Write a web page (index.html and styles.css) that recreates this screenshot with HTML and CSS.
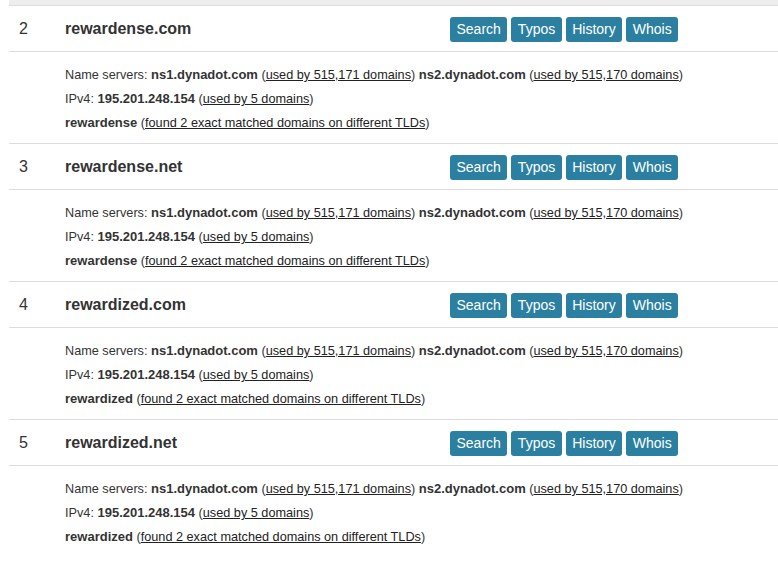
FILE: index.html
```html
<!DOCTYPE html>
<html>
<head>
<meta charset="utf-8">
<link rel="stylesheet" href="styles.css">
</head>
<body>
<div class="results">
  <div class="topband"></div>

  <div class="record">
    <div class="head">
      <div class="num">2</div>
      <div class="domain">rewardense.com</div>
      <div class="actions"><a class="btn">Search</a><a class="btn">Typos</a><a class="btn">History</a><a class="btn">Whois</a></div>
    </div>
    <div class="details">
      <div class="line">Name servers: <b>ns1.dynadot.com</b> (<a>used by 515,171 domains</a>) <b>ns2.dynadot.com</b> (<a>used by 515,170 domains</a>)</div>
      <div class="line">IPv4: <b>195.201.248.154</b> (<a>used by 5 domains</a>)</div>
      <div class="line"><b>rewardense</b> (<a>found 2 exact matched domains on different TLDs</a>)</div>
    </div>
  </div>

  <div class="record">
    <div class="head">
      <div class="num">3</div>
      <div class="domain">rewardense.net</div>
      <div class="actions"><a class="btn">Search</a><a class="btn">Typos</a><a class="btn">History</a><a class="btn">Whois</a></div>
    </div>
    <div class="details">
      <div class="line">Name servers: <b>ns1.dynadot.com</b> (<a>used by 515,171 domains</a>) <b>ns2.dynadot.com</b> (<a>used by 515,170 domains</a>)</div>
      <div class="line">IPv4: <b>195.201.248.154</b> (<a>used by 5 domains</a>)</div>
      <div class="line"><b>rewardense</b> (<a>found 2 exact matched domains on different TLDs</a>)</div>
    </div>
  </div>

  <div class="record">
    <div class="head">
      <div class="num">4</div>
      <div class="domain">rewardized.com</div>
      <div class="actions"><a class="btn">Search</a><a class="btn">Typos</a><a class="btn">History</a><a class="btn">Whois</a></div>
    </div>
    <div class="details">
      <div class="line">Name servers: <b>ns1.dynadot.com</b> (<a>used by 515,171 domains</a>) <b>ns2.dynadot.com</b> (<a>used by 515,170 domains</a>)</div>
      <div class="line">IPv4: <b>195.201.248.154</b> (<a>used by 5 domains</a>)</div>
      <div class="line"><b>rewardized</b> (<a>found 2 exact matched domains on different TLDs</a>)</div>
    </div>
  </div>

  <div class="record">
    <div class="head">
      <div class="num">5</div>
      <div class="domain">rewardized.net</div>
      <div class="actions"><a class="btn">Search</a><a class="btn">Typos</a><a class="btn">History</a><a class="btn">Whois</a></div>
    </div>
    <div class="details">
      <div class="line">Name servers: <b>ns1.dynadot.com</b> (<a>used by 515,171 domains</a>) <b>ns2.dynadot.com</b> (<a>used by 515,170 domains</a>)</div>
      <div class="line">IPv4: <b>195.201.248.154</b> (<a>used by 5 domains</a>)</div>
      <div class="line"><b>rewardized</b> (<a>found 2 exact matched domains on different TLDs</a>)</div>
    </div>
  </div>
</div>
</body>
</html>
```

FILE: styles.css
```css
html, body {
  margin: 0;
  padding: 0;
  background: #fff;
}
body {
  font-family: "Liberation Sans", Arial, sans-serif;
  color: #333;
  overflow: hidden;
}
.results {
  margin-left: 9px;
}
.topband {
  height: 5px;
  background: #eeeeee;
}
.head {
  display: flex;
  align-items: center;
  height: 45px;
  border-top: 1px solid #dddddd;
  padding-top: 1px;
  box-sizing: border-box;
  height: 46px;
}
.num {
  width: 36px;
  padding-left: 10px;
  font-size: 16px;
}
.domain {
  width: 375px;
  padding-left: 10px;
  font-size: 16px;
  font-weight: bold;
}
.actions {
  display: flex;
  gap: 4px;
  padding-left: 10px;
}
.btn {
  display: block;
  height: 25px;
  line-height: 25px;
  padding: 0 6.5px;
  font-size: 14px;
  color: #fff;
  background: #2b80a1;
  border-radius: 3px;
}
.details {
  border-top: 1px solid #dddddd;
  padding: 11px 0 8px 56px;
  font-size: 12.7px;
}
.details b {
  font-size: 13px;
  color: #333;
}
.line {
  line-height: 24px;
  white-space: nowrap;
}
.details a {
  color: #222;
  text-decoration: underline;
}
```
